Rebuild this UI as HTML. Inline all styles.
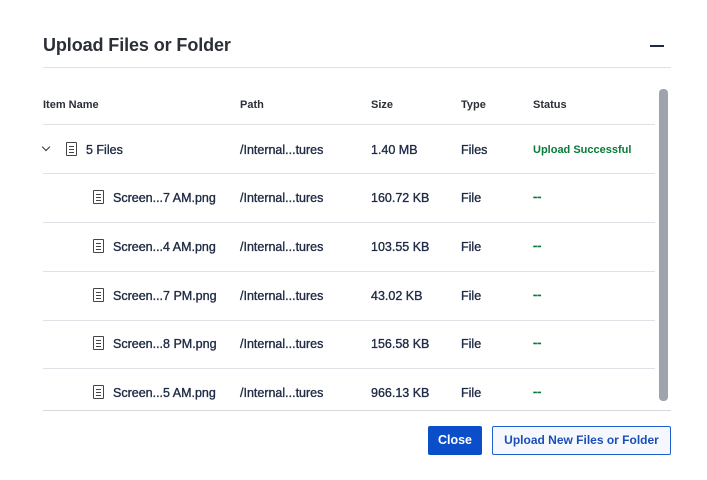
<!DOCTYPE html>
<html><head><style>
*{margin:0;padding:0;box-sizing:border-box}
body{width:707px;height:480px;background:#fff;font-family:"Liberation Sans",sans-serif;color:#1f2a44;position:relative;overflow:hidden}
.a{position:absolute;white-space:nowrap}
.t{font-size:18px;font-weight:bold;color:#2b2f36;letter-spacing:-0.1px}
.h{font-size:11px;font-weight:bold;color:#2b2f36}
.c{font-size:12.5px;color:#1f2a44;-webkit-text-stroke:0.35px #1f2a44}
.line{position:absolute;height:1px;background:#dfe1e6}
.g{color:#0a7a3a !important;-webkit-text-stroke:0.6px #0a7a3a !important}
.us{color:#0a7a3a;font-size:11px;font-weight:bold}
.ic{position:absolute;width:11px;height:14px;border:1.3px solid #444;border-radius:1px}
.ic:before{content:"";position:absolute;left:2px;right:2px;top:3px;height:5px;border-top:1px solid #444;border-bottom:1px solid #444}
.ic:after{content:"";position:absolute;left:2px;right:2px;top:5.5px;border-top:1px solid #444}
</style></head><body>
<div class="a t" style="left:43px;top:35px">Upload Files or Folder</div>
<div class="a" style="left:650px;top:45px;width:14px;height:2px;background:#1f2a44"></div>
<div class="line" style="left:43px;top:67px;width:628px"></div>
<div class="a h" style="left:43px;top:99px">Item Name</div>
<div class="a h" style="left:240px;top:99px">Path</div>
<div class="a h" style="left:371px;top:99px">Size</div>
<div class="a h" style="left:461px;top:99px">Type</div>
<div class="a h" style="left:533px;top:99px">Status</div>
<div class="a" style="left:659px;top:89px;width:9px;height:312px;background:#9ea3ad;border-radius:4px"></div>
<div class="line" style="left:43px;top:124px;width:612px"></div>
<div class="a" style="left:43px;top:144px;width:6px;height:6px;border-right:1.5px solid #333;border-bottom:1.5px solid #333;transform:rotate(45deg)"></div>
<div class="ic" style="left:66px;top:142px"></div>
<div class="a c" style="left:86px;top:143px">5 Files</div>
<div class="a c" style="left:240px;top:143px">/Internal...tures</div>
<div class="a c" style="left:371px;top:143px">1.40 MB</div>
<div class="a c" style="left:461px;top:143px">Files</div>
<div class="a us" style="left:533px;top:144px">Upload Successful</div>
<div class="line" style="left:43px;top:173px;width:612px"></div>

<div class="ic" style="left:93px;top:190px"></div>
<div class="a c" style="left:113px;top:191px">Screen...7 AM.png</div>
<div class="a c" style="left:240px;top:191px">/Internal...tures</div>
<div class="a c" style="left:371px;top:191px">160.72 KB</div>
<div class="a c" style="left:461px;top:191px">File</div>
<div class="a c g" style="left:533px;top:190px">--</div>
<div class="line" style="left:43px;top:222px;width:612px"></div>

<div class="ic" style="left:93px;top:239px"></div>
<div class="a c" style="left:113px;top:240px">Screen...4 AM.png</div>
<div class="a c" style="left:240px;top:240px">/Internal...tures</div>
<div class="a c" style="left:371px;top:240px">103.55 KB</div>
<div class="a c" style="left:461px;top:240px">File</div>
<div class="a c g" style="left:533px;top:239px">--</div>
<div class="line" style="left:43px;top:271px;width:612px"></div>

<div class="ic" style="left:93px;top:288px"></div>
<div class="a c" style="left:113px;top:289px">Screen...7 PM.png</div>
<div class="a c" style="left:240px;top:289px">/Internal...tures</div>
<div class="a c" style="left:371px;top:289px">43.02 KB</div>
<div class="a c" style="left:461px;top:289px">File</div>
<div class="a c g" style="left:533px;top:288px">--</div>
<div class="line" style="left:43px;top:320px;width:612px"></div>

<div class="ic" style="left:93px;top:336px"></div>
<div class="a c" style="left:113px;top:337px">Screen...8 PM.png</div>
<div class="a c" style="left:240px;top:337px">/Internal...tures</div>
<div class="a c" style="left:371px;top:337px">156.58 KB</div>
<div class="a c" style="left:461px;top:337px">File</div>
<div class="a c g" style="left:533px;top:336px">--</div>
<div class="line" style="left:43px;top:368px;width:612px"></div>

<div class="ic" style="left:93px;top:385px"></div>
<div class="a c" style="left:113px;top:386px">Screen...5 AM.png</div>
<div class="a c" style="left:240px;top:386px">/Internal...tures</div>
<div class="a c" style="left:371px;top:386px">966.13 KB</div>
<div class="a c" style="left:461px;top:386px">File</div>
<div class="a c g" style="left:533px;top:385px">--</div>
<div class="line" style="left:43px;top:410px;width:628px;background:#d6d8dd"></div>

<div class="a" style="left:428px;top:426px;width:54px;height:29px;background:#0a4fc9;border-radius:2px;color:#fff;font-size:12.5px;font-weight:bold;text-align:center;line-height:29px">Close</div>
<div class="a" style="left:492px;top:426px;width:179px;height:29px;background:#f5f8ff;border:1px solid #1f5fd0;border-radius:2px;color:#1a4fb5;font-size:12px;font-weight:bold;text-align:center;line-height:27px">Upload New Files or Folder</div>
</body></html>
